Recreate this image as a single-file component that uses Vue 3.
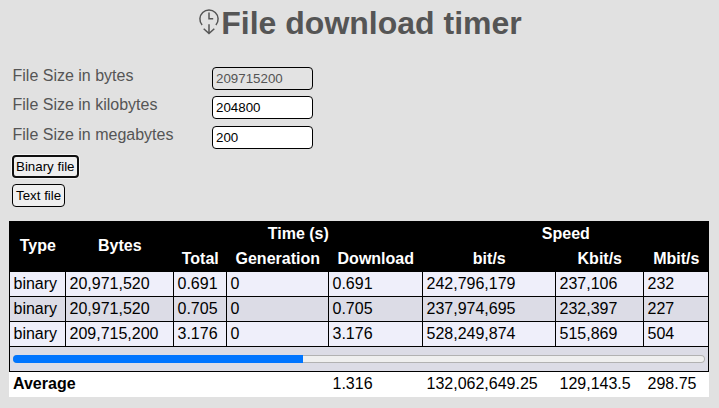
<script setup>
import { ref } from 'vue'

const fields = ref([
  { id: 'bytes', label: 'File Size in bytes', value: '209715200', disabled: true },
  { id: 'kilobytes', label: 'File Size in kilobytes', value: '204800', disabled: false },
  { id: 'megabytes', label: 'File Size in megabytes', value: '200', disabled: false },
])

const rows = [
  ['binary', '20,971,520', '0.691', '0', '0.691', '242,796,179', '237,106', '232'],
  ['binary', '20,971,520', '0.705', '0', '0.705', '237,974,695', '232,397', '227'],
  ['binary', '209,715,200', '3.176', '0', '3.176', '528,249,874', '515,869', '504'],
]

const progress = 41.9
</script>

<template>
  <main class="page">
    <h1 class="title">
      <svg class="logo" viewBox="0 0 22 27" aria-hidden="true">
        <path d="M4.1 17A9.1 9.1 0 1 1 17.9 17M11 4.6V10.8H15.2M11 16.2V25.4M5.7 20.8L11 25.6L16.3 20.8" />
      </svg><span>File download timer</span>
    </h1>
    <form class="form" @submit.prevent>
      <div v-for="f in fields" :key="f.id" class="field">
        <label :for="f.id">{{ f.label }}</label>
        <input :id="f.id" v-model="f.value" :disabled="f.disabled" />
      </div>
      <div class="action"><button type="button" class="active">Binary file</button></div>
      <div class="action"><button type="button">Text file</button></div>
    </form>
    <table class="results">
      <colgroup>
        <col class="c-type" /><col class="c-bytes" /><col class="c-total" /><col class="c-gen" />
        <col class="c-down" /><col class="c-bit" /><col class="c-kbit" /><col class="c-mbit" />
      </colgroup>
      <thead>
        <tr>
          <th rowspan="2" class="tall">Type</th>
          <th rowspan="2" class="tall">Bytes</th>
          <th colspan="3">Time (s)</th>
          <th colspan="3">Speed</th>
        </tr>
        <tr>
          <th>Total</th><th>Generation</th><th>Download</th>
          <th>bit/s</th><th>Kbit/s</th><th>Mbit/s</th>
        </tr>
      </thead>
      <tbody>
        <tr v-for="(r, i) in rows" :key="i">
          <td v-for="(c, j) in r" :key="j">{{ c }}</td>
        </tr>
        <tr>
          <td colspan="8" class="progress">
            <div class="bar"><div class="fill" :style="{ width: progress + '%' }"></div></div>
          </td>
        </tr>
      </tbody>
      <tfoot>
        <tr>
          <th colspan="4">Average</th>
          <td>1.316</td><td>132,062,649.25</td><td>129,143.5</td><td>298.75</td>
        </tr>
      </tfoot>
    </table>
  </main>
</template>

<style>
body {
  background: #e1e1e1;
}
</style>

<style scoped>
.page {
  box-sizing: border-box;
  height: 408px;
  padding: 5px 10px 0 9px;
  font: 16px/18px "Liberation Sans", Arial, sans-serif;
  color: #555;
  overflow: hidden;
}
.title {
  display: flex;
  justify-content: center;
  gap: 1.5px;
  height: 62px;
  margin: 0;
  padding-left: 1.5px;
  font-size: 32px;
  line-height: 37px;
  white-space: nowrap;
}
.logo {
  width: 22px;
  height: 27px;
  margin-top: 3px;
  fill: none;
  stroke: #555;
  stroke-width: 1.5;
}
.form {
  display: grid;
  grid-template-rows: 29px 30px 29px 29px 37px;
  padding-left: 3px;
}
.field {
  display: flex;
  align-items: flex-start;
}
.field label {
  box-sizing: border-box;
  width: 200px;
  padding-left: 0.5px;
}
input,
button {
  box-sizing: border-box;
  height: 23px;
  border: 1px solid #000;
  border-radius: 4px;
  font: 13.333px "Liberation Sans", Arial, sans-serif;
}
input {
  width: 101px;
  padding: 0 3px;
  background: #fff;
  color: #000;
}
input:disabled {
  background: #e3e3e3;
  color: #545454;
}
.action {
  display: flex;
  align-items: flex-start;
}
button {
  padding: 0 3px;
  background: #efefef;
  color: #000;
}
.active {
  padding: 0 2px;
  border: 2px solid #101010;
  box-shadow: 0 0 0 1px #f4f4f4;
}
.results {
  width: 700px;
  table-layout: fixed;
  border-collapse: collapse;
  background: #fff;
  color: #000;
}
.c-type { width: 56px; }
.c-bytes { width: 108px; }
.c-total { width: 53px; }
.c-gen { width: 102px; }
.c-down { width: 94px; }
.c-bit { width: 133px; }
.c-kbit { width: 88px; }
.c-mbit { width: 65px; }
th,
td {
  box-sizing: border-box;
  height: 25px;
  padding: 3px 3px 3px 3.5px;
  text-align: left;
  white-space: nowrap;
}
thead {
  background: #000;
  color: #fff;
}
thead th {
  border: 1px solid #000;
  text-align: center;
}
thead .tall {
  padding-bottom: 5px;
}
tbody td {
  border: 1px solid #000;
}
tbody .progress {
  padding-left: 3px;
}
tbody tr:nth-child(odd) {
  background: #efeffa;
}
tbody tr:nth-child(even) {
  background: #dcdce6;
}
tfoot td,
tfoot th {
  border: 0 solid transparent;
  padding-left: 4px;
}
tfoot th {
  padding-left: 3.5px;
}
.bar {
  height: 8px;
  border-radius: 4px;
  background: #efefef;
  box-shadow: inset 0 0 0 1px #b2b2b2;
  overflow: hidden;
}
.fill {
  height: 100%;
  background: #0075ff;
}
</style>
